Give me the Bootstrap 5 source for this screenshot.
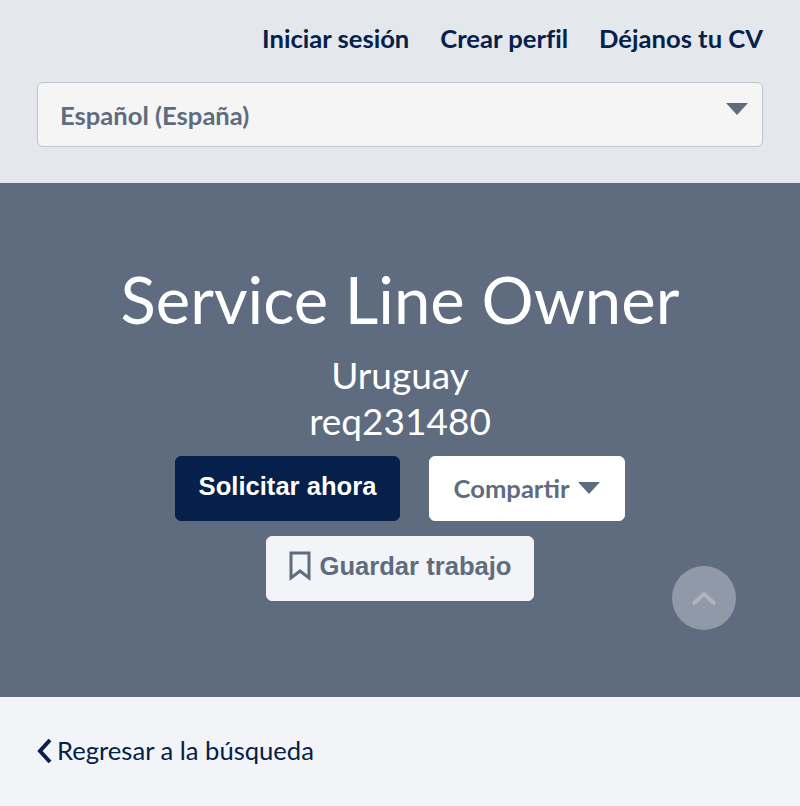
<!DOCTYPE html>
<html lang="es">
<head>
    <meta charset="UTF-8">
    <title>Service Line Owner</title>
    <link href="https://cdn.jsdelivr.net/npm/bootstrap@5.3.0/dist/css/bootstrap.min.css" rel="stylesheet">
    <style>
        body {
            background-color: #f2f4f7;
            font-family: "Lato", sans-serif;
            font-variant-ligatures: none;
            overflow: hidden;
        }
        .top-area {
            background-color: #e4e7ec;
            height: 183px;
            padding: 23px 37px 0;
        }
        .top-links {
            gap: 31px;
            margin-bottom: 29px;
        }
        .top-links a {
            color: #05204a;
            font-size: 25.6px;
            font-weight: 700;
            line-height: 30px;
            text-decoration: none;
        }
        .lang-box {
            height: 65px;
            background-color: #f5f5f5;
            border: 1px solid #c0c6ce;
            border-radius: 6px;
            padding: 0 14px 0 22px;
            color: #5f6c7f;
            font-size: 25.6px;
            font-weight: 700;
        }
        .lang-box span {
            margin-top: 2px;
        }
        .caret-down {
            width: 22px;
            height: 12px;
            fill: #5f6c7f;
        }
        .lang-box .caret-down {
            margin-top: -12px;
        }
        .hero {
            background-color: #5f6c7f;
            height: 514px;
            color: #fff;
            padding-top: 74px;
        }
        .hero h1 {
            font-size: 65.2px;
            font-weight: 400;
            line-height: 84px;
            margin-bottom: 11px;
        }
        .hero-sub {
            font-size: 37px;
            line-height: 46px;
        }
        .btn-row {
            gap: 29px;
            margin-top: 12px;
            margin-bottom: 15px;
        }
        .btn-solicitar, .btn-compartir, .btn-guardar {
            height: 65px;
            border-radius: 6px;
            font-size: 25.6px;
            padding: 0;
        }
        .btn-solicitar {
            width: 225px;
            background-color: #05204a;
            border: 1px solid #05204a;
            color: #fff;
            font-family: "Liberation Sans", sans-serif;
            font-weight: 700;
            padding-bottom: 4px;
        }
        .btn-compartir {
            width: 196px;
            background-color: #fff;
            border: 1px solid #fff;
            color: #5f6c7f;
            font-weight: 700;
        }
        .btn-compartir .caret-down {
            margin-left: 9px;
            margin-top: -8px;
        }
        .btn-guardar {
            width: 268px;
            background-color: #f2f4f7;
            border: 1px solid #f2f4f7;
            color: #5f6c7f;
            font-family: "Liberation Sans", sans-serif;
            font-weight: 700;
            padding-bottom: 4px;
        }
        .mark-icon {
            width: 24px;
            height: 32px;
            margin-right: 7px;
        }
        .to-top {
            position: absolute;
            left: 672px;
            top: 566px;
            width: 64px;
            height: 64px;
            border-radius: 50%;
            background-color: #8f99a8;
        }
        .back-row {
            padding: 35px 37px 0;
        }
        .back-row a {
            color: #05204a;
            font-size: 25.6px;
            line-height: 36px;
            text-decoration: none;
        }
        .back-icon {
            width: 15px;
            height: 26px;
            margin-right: 5px;
            margin-top: -6px;
        }
    </style>
</head>
<body>
    <div class="top-area">
        <div class="d-flex justify-content-end top-links">
            <a href="#">Iniciar sesión</a>
            <a href="#">Crear perfil</a>
            <a href="#">Déjanos tu CV</a>
        </div>
        <div class="lang-box d-flex justify-content-between align-items-center">
            <span>Español (España)</span>
            <svg class="caret-down" viewBox="0 0 22 12"><path d="M0 0H22L11 12Z"/></svg>
        </div>
    </div>

    <div class="hero text-center">
        <h1>Service Line Owner</h1>
        <div class="hero-sub">Uruguay</div>
        <div class="hero-sub">req231480</div>
        <div class="d-flex justify-content-center btn-row">
            <button class="btn btn-solicitar" type="button">Solicitar ahora</button>
            <button class="btn btn-compartir" type="button">Compartir<svg class="caret-down" viewBox="0 0 22 12"><path d="M0 0H22L11 12Z"/></svg></button>
        </div>
        <div class="d-flex justify-content-center">
            <button class="btn btn-guardar d-flex align-items-center justify-content-center" type="button">
                <svg class="mark-icon" viewBox="0 0 24 32"><path d="M3 2H21V27L12 20L3 27Z" fill="none" stroke="#5f6c7f" stroke-width="3"/></svg>Guardar trabajo
            </button>
        </div>
    </div>

    <div class="to-top d-flex align-items-center justify-content-center">
        <svg width="26" height="16" viewBox="0 0 26 16"><path d="M2 14L13 4L24 14" fill="none" stroke="#aeb5c0" stroke-width="4"/></svg>
    </div>

    <div class="back-row">
        <a href="#"><svg class="back-icon" viewBox="0 0 15 26"><path d="M13 2L3 13L13 24" fill="none" stroke="#05204a" stroke-width="4"/></svg>Regresar a la búsqueda</a>
    </div>

    <script src="https://cdn.jsdelivr.net/npm/bootstrap@5.3.0/dist/js/bootstrap.bundle.min.js"></script>
</body>
</html>
